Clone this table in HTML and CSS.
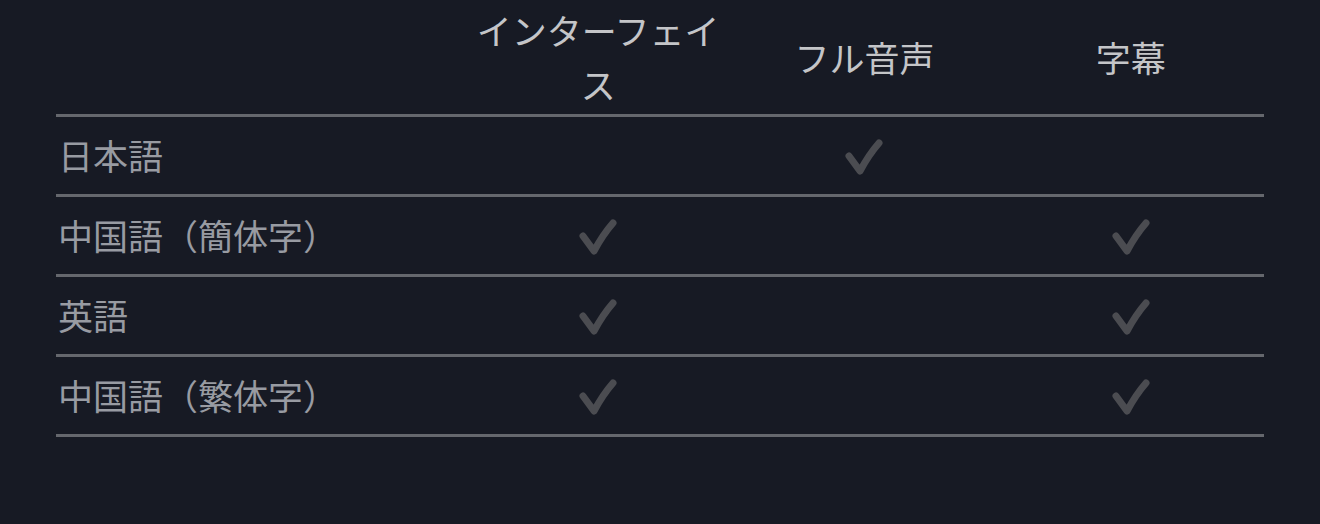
FILE: index.html
```html
<!DOCTYPE html>
<html lang="ja">
<head>
<meta charset="utf-8">
<link rel="stylesheet" href="styles.css">
</head>
<body>
<table class="langs">
  <thead>
    <tr>
      <th class="name-col"></th>
      <th class="opt">インターフェイス</th>
      <th class="opt">フル音声</th>
      <th class="opt">字幕</th>
    </tr>
  </thead>
  <tbody>
    <tr>
      <td class="lang">日本語</td>
      <td class="check"></td>
      <td class="check"><svg class="tick" viewBox="0 0 48 48"><path d="M9 25 L20 40 C26 29 32 20 39 12"/></svg></td>
      <td class="check"></td>
    </tr>
    <tr>
      <td class="lang">中国語（簡体字）</td>
      <td class="check"><svg class="tick" viewBox="0 0 48 48"><path d="M9 25 L20 40 C26 29 32 20 39 12"/></svg></td>
      <td class="check"></td>
      <td class="check"><svg class="tick" viewBox="0 0 48 48"><path d="M9 25 L20 40 C26 29 32 20 39 12"/></svg></td>
    </tr>
    <tr>
      <td class="lang">英語</td>
      <td class="check"><svg class="tick" viewBox="0 0 48 48"><path d="M9 25 L20 40 C26 29 32 20 39 12"/></svg></td>
      <td class="check"></td>
      <td class="check"><svg class="tick" viewBox="0 0 48 48"><path d="M9 25 L20 40 C26 29 32 20 39 12"/></svg></td>
    </tr>
    <tr>
      <td class="lang">中国語（繁体字）</td>
      <td class="check"><svg class="tick" viewBox="0 0 48 48"><path d="M9 25 L20 40 C26 29 32 20 39 12"/></svg></td>
      <td class="check"></td>
      <td class="check"><svg class="tick" viewBox="0 0 48 48"><path d="M9 25 L20 40 C26 29 32 20 39 12"/></svg></td>
    </tr>
  </tbody>
</table>
</body>
</html>
```
FILE: styles.css
```css
html, body {
  margin: 0;
  padding: 0;
  background: #171a24;
  height: 100%;
}
body {
  font-family: "Noto Sans CJK JP", "Noto Sans", sans-serif;
  font-size: 35px;
}
.langs {
  margin-left: 56px;
  width: 1208px;
  border-collapse: collapse;
  table-layout: fixed;
}
.name-col {
  width: 409px;
}
.langs th {
  font-weight: 400;
  color: #c4c5c8;
  line-height: 54px;
  height: 115px;
  padding: 0 10px;
  vertical-align: middle;
  text-align: center;
  border-bottom: 3px solid #65676d;
  box-sizing: border-box;
}
.langs td {
  height: 77px;
  padding: 0;
  vertical-align: middle;
  border-bottom: 3px solid #65676d;
}
.lang {
  color: #989ba2;
  padding-left: 2px !important;
  line-height: 40px;
  white-space: nowrap;
}
.check {
  text-align: center;
}
.tick {
  display: block;
  margin: 0 auto;
  width: 48px;
  height: 48px;
  fill: none;
  stroke: #4b4c51;
  stroke-width: 7;
  stroke-linecap: round;
  stroke-linejoin: round;
}
```
